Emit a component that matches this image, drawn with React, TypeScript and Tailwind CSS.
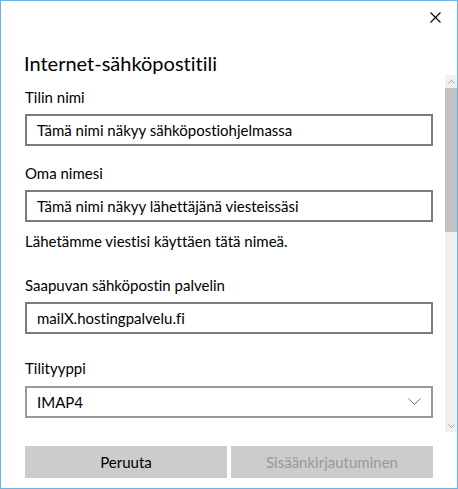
import React from "react";

function Field({ label, value, labelMt }: { label: string; value: string; labelMt: string }) {
  return (
    <>
      <div className={`${labelMt} text-[15px] leading-[20px] text-[#000]`}>{label}</div>
      <div className="mt-[7px] h-[32px] border-2 border-[#7a7a7a] flex items-center pl-[10px] text-[15px] text-[#000] leading-[20px]">
        {value}
      </div>
    </>
  );
}

export default function App() {
  return (
    <div
      className="relative w-[458px] h-[489px] bg-white border border-[#68b4e8] flex flex-col overflow-hidden [font-variant-ligatures:none]"
      style={{ fontFamily: 'Lato, "Open Sans", sans-serif' }}
    >
      <button className="absolute left-[427px] top-[9px] w-[14px] h-[14px] flex items-center justify-center">
        <svg width="11" height="11" viewBox="0 0 11 11">
          <path d="M0.5 0.5 L10.5 10.5 M10.5 0.5 L0.5 10.5" stroke="#000" strokeWidth="1.1" />
        </svg>
      </button>
      <div className="h-[74px] pl-[23px] pt-[50px]">
        <div className="text-[20px] leading-[24px] text-[#000]">Internet-sähköpostitili</div>
      </div>
      <div className="flex h-[357px]">
        <div className="flex-1 flex flex-col pl-[24px] pr-[12px] pt-[12px]">
          <Field label="Tilin nimi" value="Tämä nimi näkyy sähköpostiohjelmassa" labelMt="mt-0" />
          <Field label="Oma nimesi" value="Tämä nimi näkyy lähettäjänä viesteissäsi" labelMt="mt-[17px]" />
          <div className="mt-[9px] text-[15px] leading-[20px] text-[#000]">Lähetämme viestisi käyttäen tätä nimeä.</div>
          <Field label="Saapuvan sähköpostin palvelin" value="mailX.hostingpalvelu.fi" labelMt="mt-[24px]" />
          <div className="mt-[24px] text-[15px] leading-[20px] text-[#000]">Tilityyppi</div>
          <div className="mt-[8px] h-[32px] border-2 border-[#999999] flex items-center justify-between pl-[10px] pr-[10px] text-[15px] text-[#000] leading-[20px]">
            <span>IMAP4</span>
            <svg width="13" height="8" viewBox="0 0 13 8">
              <path d="M0.5 0.5 L6.5 6.5 L12.5 0.5" stroke="#777" strokeWidth="1" fill="none" />
            </svg>
          </div>
        </div>
        <div className="w-[12px] flex flex-col bg-[#f0f0f0]">
          <div className="h-[13px] flex items-center justify-center">
            <svg width="7" height="4" viewBox="0 0 7 4">
              <path d="M0.5 3.5 L3.5 0.5 L6.5 3.5" stroke="#a0a0a0" strokeWidth="1" fill="none" />
            </svg>
          </div>
          <div className="h-[144px] bg-[#c2c2c2]" />
          <div className="flex-1" />
          <div className="h-[13px] flex items-center justify-center">
            <svg width="7" height="4" viewBox="0 0 7 4">
              <path d="M0.5 0.5 L3.5 3.5 L6.5 0.5" stroke="#a0a0a0" strokeWidth="1" fill="none" />
            </svg>
          </div>
        </div>
      </div>
      <div className="flex gap-[4px] pl-[24px] pr-[24px] mt-[14px]">
        <button className="w-[202px] h-[32px] bg-[#cccccc] text-[15px] text-[#000] leading-[20px]">Peruuta</button>
        <button className="w-[202px] h-[32px] bg-[#cccccc] text-[15px] text-[#999999] leading-[20px]">Sisäänkirjautuminen</button>
      </div>
    </div>
  );
}
